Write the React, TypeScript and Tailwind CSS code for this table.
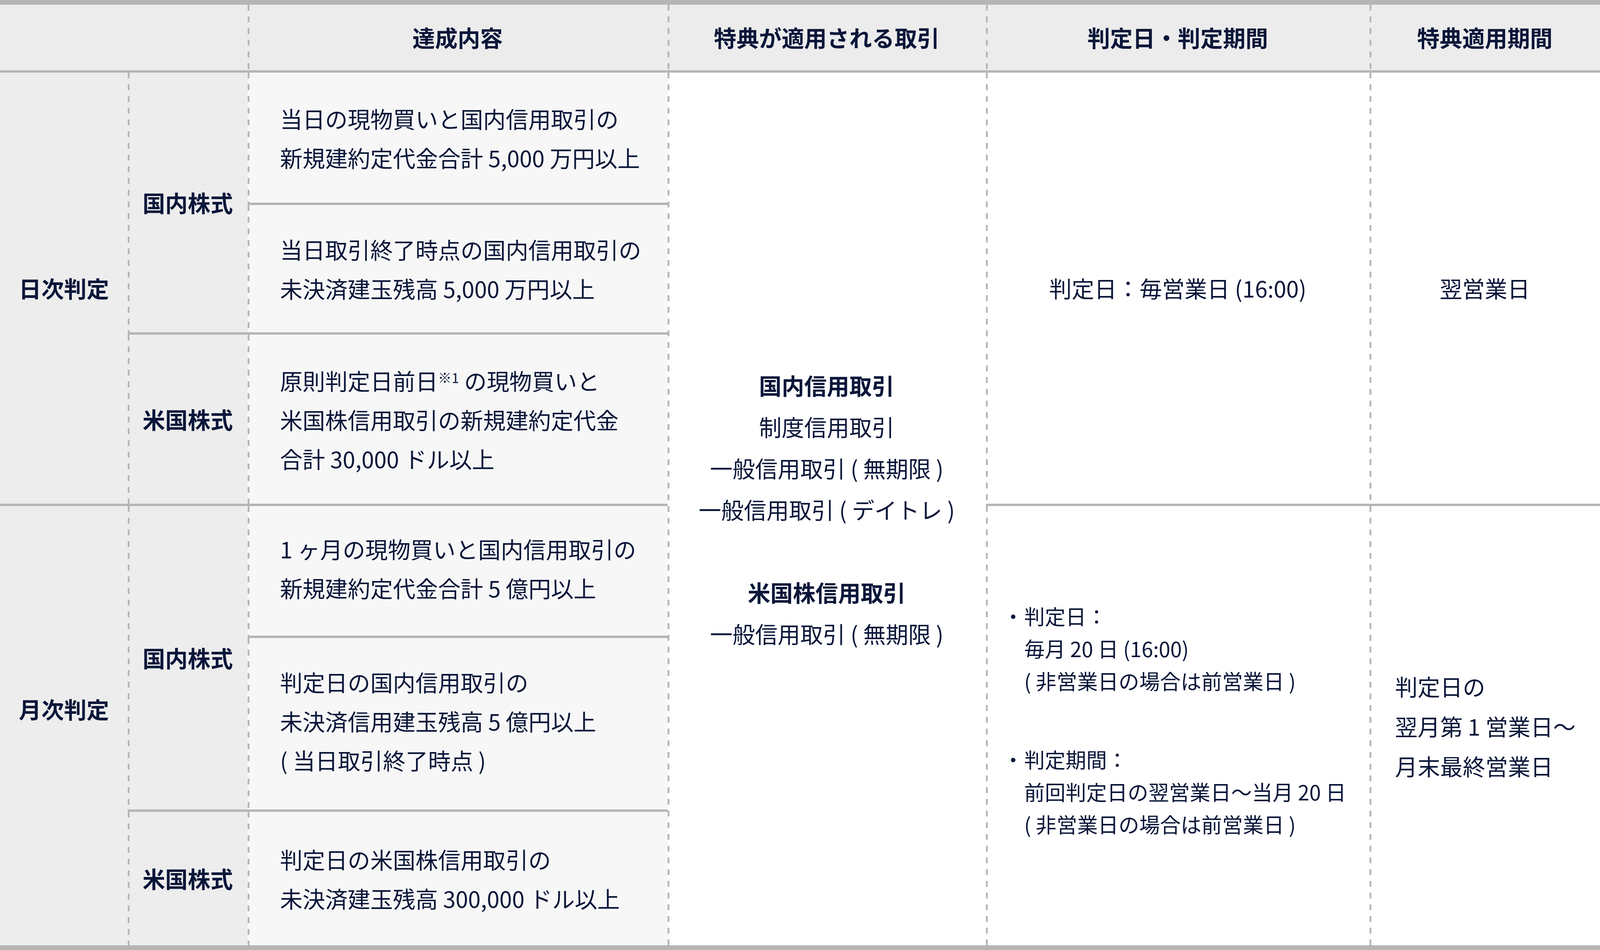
import * as React from 'react';

const line = 'border-[#b5b5b5]';
const dashed =
  'bg-[image:repeating-linear-gradient(to_bottom,#b5b5b5_0px,#b5b5b5_15px,transparent_15px,transparent_30px)] bg-[length:4.6px_100%] bg-no-repeat';

type CellProps = {
  className?: string;
  children?: React.ReactNode;
};

const Head = ({ className = '', children }: CellProps) => (
  <div
    className={`row-start-1 flex items-center justify-center border-b-[6px] ${line} bg-[#ececec] font-bold leading-none ${className}`}>
    {children}
  </div>
);

const Label = ({ className = '', children }: CellProps) => (
  <div
    className={`flex items-center justify-center bg-[#ededed] font-bold leading-none ${line} ${className}`}>
    {children}
  </div>
);

const Achieve = ({ className = '', children }: CellProps) => (
  <div
    className={`col-start-3 flex items-center whitespace-nowrap bg-[#f7f7f7] pl-[82.8px] leading-[100px] ${line} ${dashed} ${className}`}>
    <div>{children}</div>
  </div>
);

const Bullet = ({ children }: CellProps) => (
  <div className="flex">
    <span className="w-[55.7px] shrink-0 text-center">・</span>
    <div>{children}</div>
  </div>
);

export default function App() {
  return (
    <div className="w-full bg-white font-['Noto_Sans_CJK_JP','Noto_Sans_CJK_SC',sans-serif] text-[57.8px] text-[#0a1639]">
      <div
        className={`grid w-full grid-cols-[423fr_396fr_1389fr_1053fr_1269fr_762fr] grid-rows-[174px_339px_332px_439px_338px_445px_342px] border-y-[12px] ${line}`}>
        {/* header */}
        <Head className="col-start-1 col-span-2" />
        <Head className={`col-start-3 ${dashed}`}>達成内容</Head>
        <Head className={`col-start-4 ${dashed}`}>特典が適用される取引</Head>
        <Head className={`col-start-5 ${dashed}`}>判定日・判定期間</Head>
        <Head className={`col-start-6 ${dashed}`}>特典適用期間</Head>

        {/* 日次 / 月次 */}
        <Label className="col-start-1 row-start-2 row-span-3 border-b-[6px]">
          日次判定
        </Label>
        <Label className="col-start-1 row-start-5 row-span-3 pb-[86px]">
          月次判定
        </Label>

        {/* market */}
        <Label className={`col-start-2 row-start-2 row-span-2 border-b-[6px] ${dashed}`}>
          国内株式
        </Label>
        <Label className={`col-start-2 row-start-4 border-b-[6px] ${dashed}`}>
          米国株式
        </Label>
        <Label className={`col-start-2 row-start-5 row-span-2 border-b-[6px] ${dashed}`}>
          国内株式
        </Label>
        <Label className={`col-start-2 row-start-7 ${dashed}`}>米国株式</Label>

        {/* 達成内容 */}
        <Achieve className="row-start-2 border-b-[6px]">
          当日の現物買いと国内信用取引の
          <br />
          新規建約定代金合計 5,000 万円以上
        </Achieve>
        <Achieve className="row-start-3 border-b-[6px]">
          当日取引終了時点の国内信用取引の
          <br />
          未決済建玉残高 5,000 万円以上
        </Achieve>
        <Achieve className="row-start-4 border-b-[6px]">
          原則判定日前日
          <sup className="text-[0.6em] leading-none">※1</sup> の現物買いと
          <br />
          米国株信用取引の新規建約定代金
          <br />
          合計 30,000 ドル以上
        </Achieve>
        <Achieve className="row-start-5 border-b-[6px] pb-[14px]">
          1 ヶ月の現物買いと国内信用取引の
          <br />
          新規建約定代金合計 5 億円以上
        </Achieve>
        <Achieve className="row-start-6 border-b-[6px] pb-[16px]">
          判定日の国内信用取引の
          <br />
          未決済信用建玉残高 5 億円以上
          <br />( 当日取引終了時点 )
        </Achieve>
        <Achieve className="row-start-7">
          判定日の米国株信用取引の
          <br />
          未決済建玉残高 300,000 ドル以上
        </Achieve>

        {/* 特典が適用される取引 */}
        <div
          className={`col-start-4 row-start-2 row-span-6 flex flex-col items-center justify-center whitespace-nowrap bg-white text-center leading-[106px] ${dashed}`}>
          <p className="font-bold">国内信用取引</p>
          <p>制度信用取引</p>
          <p>一般信用取引 ( 無期限 )</p>
          <p>一般信用取引 ( デイトレ )</p>
          <p className="mt-[106px] font-bold">米国株信用取引</p>
          <p>一般信用取引 ( 無期限 )</p>
        </div>

        {/* 判定日・判定期間 */}
        <div
          className={`col-start-5 row-start-2 row-span-3 flex items-center justify-center border-b-[6px] ${line} bg-white leading-none ${dashed}`}>
          判定日：毎営業日 (16:00)
        </div>
        <div
          className={`col-start-5 row-start-5 row-span-3 flex items-center whitespace-nowrap bg-white pb-[30px] pl-[42px] text-[53px] leading-[83px] ${dashed}`}>
          <div>
            <Bullet>
              判定日：
              <br />
              毎月 20 日 (16:00)
              <br />( 非営業日の場合は前営業日 )
            </Bullet>
            <div className="mt-[118px]">
              <Bullet>
                判定期間：
                <br />
                前回判定日の翌営業日〜当月 20 日
                <br />( 非営業日の場合は前営業日 )
              </Bullet>
            </div>
          </div>
        </div>

        {/* 特典適用期間 */}
        <div
          className={`col-start-6 row-start-2 row-span-3 flex items-center justify-center border-b-[6px] ${line} bg-white leading-none ${dashed}`}>
          翌営業日
        </div>
        <div
          className={`col-start-6 row-start-5 row-span-3 flex items-center whitespace-nowrap bg-white pl-[65px] leading-[102px] ${dashed}`}>
          <div>
            判定日の
            <br />
            翌月第 1 営業日〜
            <br />
            月末最終営業日
          </div>
        </div>
      </div>
    </div>
  );
}
